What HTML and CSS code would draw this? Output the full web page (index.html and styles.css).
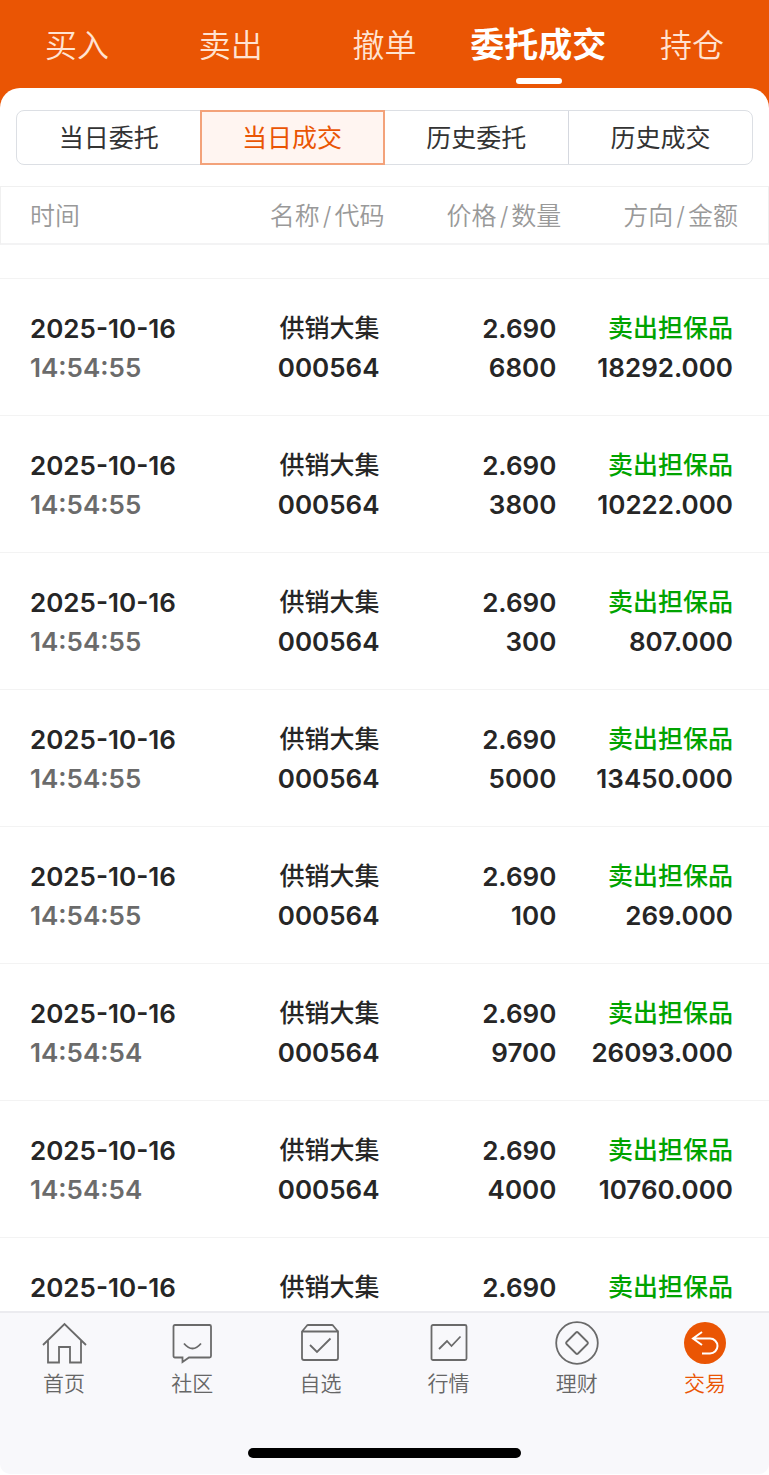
FILE: index.html
```
<!DOCTYPE html>
<html lang="zh-CN">
<head>
  <meta charset="UTF-8" />
  <meta name="viewport" content="width=device-width, initial-scale=1.0" />
  <title>委托成交</title>
  <link rel="stylesheet" href="styles.css">
</head>
<body>
  <header class="top-tabs">
    <button type="button">买入</button>
    <button type="button">卖出</button>
    <button type="button">撤单</button>
    <button type="button" class="active">委托成交</button>
    <button type="button">持仓</button>
  </header>

  <main class="panel">
    <div class="segment">
      <button type="button">当日委托</button>
      <button type="button" class="active">当日成交</button>
      <button type="button">历史委托</button>
      <button type="button">历史成交</button>
    </div>

    <div class="list">
      <table class="deals">
        <thead>
          <tr>
            <th>时间</th>
            <th>名称<i>/</i>代码</th>
            <th>价格<i>/</i>数量</th>
            <th>方向<i>/</i>金额</th>
          </tr>
        </thead>
        <tbody>
          <tr class="spacer"><td colspan="4"></td></tr>
          <tr>
            <td>2025-10-16<span class="time">14:54:55</span></td>
            <td><b>供销大集</b><span>000564</span></td>
            <td>2.690<span>6800</span></td>
            <td><b class="sell">卖出担保品</b><span>18292.000</span></td>
          </tr>
          <tr>
            <td>2025-10-16<span class="time">14:54:55</span></td>
            <td><b>供销大集</b><span>000564</span></td>
            <td>2.690<span>3800</span></td>
            <td><b class="sell">卖出担保品</b><span>10222.000</span></td>
          </tr>
          <tr>
            <td>2025-10-16<span class="time">14:54:55</span></td>
            <td><b>供销大集</b><span>000564</span></td>
            <td>2.690<span>300</span></td>
            <td><b class="sell">卖出担保品</b><span>807.000</span></td>
          </tr>
          <tr>
            <td>2025-10-16<span class="time">14:54:55</span></td>
            <td><b>供销大集</b><span>000564</span></td>
            <td>2.690<span>5000</span></td>
            <td><b class="sell">卖出担保品</b><span>13450.000</span></td>
          </tr>
          <tr>
            <td>2025-10-16<span class="time">14:54:55</span></td>
            <td><b>供销大集</b><span>000564</span></td>
            <td>2.690<span>100</span></td>
            <td><b class="sell">卖出担保品</b><span>269.000</span></td>
          </tr>
          <tr>
            <td>2025-10-16<span class="time">14:54:54</span></td>
            <td><b>供销大集</b><span>000564</span></td>
            <td>2.690<span>9700</span></td>
            <td><b class="sell">卖出担保品</b><span>26093.000</span></td>
          </tr>
          <tr>
            <td>2025-10-16<span class="time">14:54:54</span></td>
            <td><b>供销大集</b><span>000564</span></td>
            <td>2.690<span>4000</span></td>
            <td><b class="sell">卖出担保品</b><span>10760.000</span></td>
          </tr>
          <tr>
            <td>2025-10-16</td>
            <td><b>供销大集</b></td>
            <td>2.690</td>
            <td><b class="sell">卖出担保品</b></td>
          </tr>
        </tbody>
      </table>
    </div>
  </main>

  <footer class="bottom">
    <nav class="nav">
      <a href="#">
        <svg viewBox="0 0 48 48"><path d="M3 26 24.500 5 46 26M8 21.500V43.500H19V28H30V43.500H41V21.500"/></svg>
        首页
      </a>
      <a href="#">
        <svg viewBox="0 0 48 48"><path d="M7 6H41.500Q43 6 43 7.500V37Q43 38.500 41.500 38.500H21L14.500 43V38.500H7Q5.500 38.500 5.500 37V7.500Q5.500 6 7 6ZM16 24.500Q24.500 34.500 33 24.500"/></svg>
        社区
      </a>
      <a href="#">
        <svg viewBox="0 0 48 48"><path d="M6 12.500H42V39Q42 41 40 41H8Q6 41 6 39V12.500L11 6.500Q11.500 6 12 6H36Q36.500 6 37 6.500L42 12.500M14 26 21 33 34.500 19.500"/></svg>
        自选
      </a>
      <a href="#">
        <svg viewBox="0 0 48 48"><rect x="6.500" y="6" width="35" height="35" rx="1.500"/><path d="M14 30 22 22 26.500 27 35.500 17.500"/></svg>
        行情
      </a>
      <a href="#">
        <svg viewBox="0 0 48 48"><circle cx="24" cy="24" r="20.800"/><path d="M23 13.500Q24 12.500 25 13.500L34.500 23Q35.500 24 34.500 25L25 34.500Q24 35.500 23 34.500L13.500 25Q12.500 24 13.500 23Z"/></svg>
        理财
      </a>
      <a href="#" class="active">
        <svg viewBox="0 0 48 48"><circle cx="24" cy="24" r="21"/><path d="M21 13 12 19.500 21 26M12 19.500H29A7.500 7.500 0 0 1 29 34.500H21"/></svg>
        交易
      </a>
    </nav>
    <div class="home-bar"></div>
  </footer>
</body>
</html>
```
FILE: styles.css
```
* {
  margin: 0;
  padding: 0;
  box-sizing: border-box;
}
body {
  font-family: Inter, "Noto Sans CJK SC", sans-serif;
  background-color: #fff;
  color: #262626;
  display: flex;
  flex-direction: column;
  height: 100vh;
  overflow: hidden;
}
button {
  font-family: inherit;
  border: none;
  background: none;
  cursor: pointer;
}

/* top tabs */
.top-tabs {
  display: flex;
  background-color: #ea5504;
  padding-bottom: 20px;
}
.top-tabs button {
  flex: 1;
  height: 88px;
  padding-bottom: 3px;
  font-size: 32px;
  font-weight: 350;
  color: #ffe3d2;
  white-space: nowrap;
  position: relative;
}
.top-tabs .active {
  font-size: 34px;
  font-weight: 700;
  color: #fff;
}
.top-tabs .active::after {
  content: "";
  position: absolute;
  left: 50%;
  bottom: 4px;
  width: 46px;
  height: 6px;
  margin-left: -22px;
  border-radius: 3px;
  background: #fff;
}

.panel {
  flex: 1;
  min-height: 0;
  display: flex;
  flex-direction: column;
  margin-top: -20px;
  padding-top: 22px;
  background: #fff;
  border-radius: 20px 20px 0 0;
  position: relative;
}
.segment {
  display: grid;
  grid-template-columns: repeat(4, 1fr);
  margin: 0 16px 21px;
  height: 55px;
  flex-shrink: 0;
  border: 1px solid #dcdfe4;
  border-radius: 8px;
}
.segment button {
  padding-bottom: 3px;
  font-size: 25px;
  color: #333;
}
.segment button + button {
  border-left: 1px solid #d5d8df;
}
.segment button.active {
  margin: -1px 0 -1px -1px;
  color: #ea5504;
  background: #fff5f1;
  border: 2px solid #f3a27a;
}
.segment .active + button {
  border-left: none;
}

/* deals list */
.list {
  flex: 1;
  min-height: 0;
  overflow: hidden;
}
.deals {
  width: 100%;
  table-layout: fixed;
  border-collapse: separate;
  border-spacing: 0;
}
.deals th {
  width: 23%;
  height: 59px;
  padding-bottom: 2px;
  font-size: 25px;
  font-weight: 350;
  color: #999;
  text-align: right;
  white-space: nowrap;
  border-top: 1px solid #f0f0f0;
  border-bottom: 2px solid #f3f3f4;
}
.deals th:first-child {
  width: 25%;
  padding-left: 29px;
  text-align: left;
  border-left: 1px solid #f0f0f0;
}
.deals th:nth-child(2) {
  width: 25%;
}
.deals th:last-child {
  width: 27%;
  padding-right: 30px;
  border-right: 1px solid #f0f0f0;
}
.deals i {
  margin: 0 3px;
  font-style: normal;
}
.deals td {
  padding: 30px 5px 28px 0;
  font-size: 26px;
  font-weight: 600;
  line-height: 39px;
  text-align: right;
  white-space: nowrap;
  border-bottom: 1px solid #f3f3f3;
  vertical-align: top;
}
.deals td:first-child {
  padding-left: 30px;
  text-align: left;
}
.deals td:last-child {
  padding-right: 36px;
}
.deals .spacer td {
  height: 34px;
  padding: 0;
}
.deals span,
.deals b {
  display: block;
}
.deals .time {
  color: #6b6b6b;
}
.deals b {
  font-size: 25px;
  font-weight: 500;
}
.deals .sell {
  color: #00a300;
}

/* bottom nav */
.bottom {
  background: #f8f8fb;
  border-top: 2px solid #ebebef;
  border-radius: 0 0 10px 10px;
  padding: 6px 0 16px;
  margin-bottom: 1px;
}
.nav {
  display: flex;
}
.nav a {
  flex: 1;
  display: flex;
  flex-direction: column;
  align-items: center;
  font-size: 21px;
  font-weight: 350;
  line-height: 34px;
  color: #666;
  text-decoration: none;
}
.nav svg {
  width: 48px;
  height: 48px;
  fill: none;
  stroke: #6a6a6a;
  stroke-width: 1.8;
}
.nav .active {
  color: #ea5504;
}
.nav .active svg {
  stroke: #fff;
  stroke-width: 2;
}
.nav .active circle {
  fill: #ea5504;
  stroke: none;
}
.home-bar {
  width: 273px;
  height: 10px;
  margin: 47px auto 0;
  border-radius: 5px;
  background: #000;
}
```
